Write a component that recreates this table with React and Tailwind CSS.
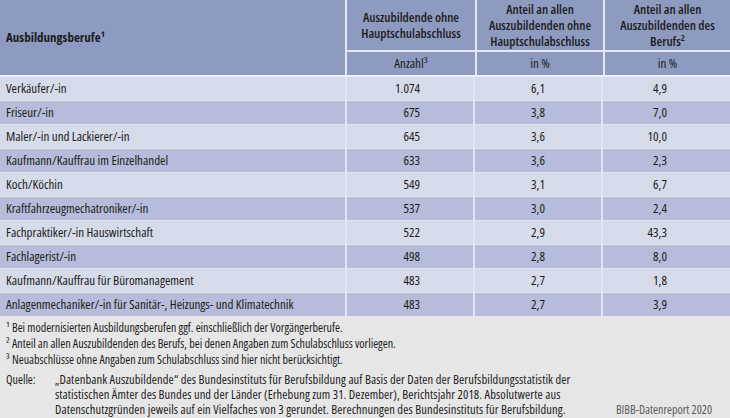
import React from 'react'

const rows = [
  ['Verkäufer/-in', '1.074', '6,1', '4,9'],
  ['Friseur/-in', '675', '3,8', '7,0'],
  ['Maler/-in und Lackierer/-in', '645', '3,6', '10,0'],
  ['Kaufmann/Kauffrau im Einzelhandel', '633', '3,6', '2,3'],
  ['Koch/Köchin', '549', '3,1', '6,7'],
  ['Kraftfahrzeugmechatroniker/-in', '537', '3,0', '2,4'],
  ['Fachpraktiker/-in Hauswirtschaft', '522', '2,9', '43,3'],
  ['Fachlagerist/-in', '498', '2,8', '8,0'],
  ['Kaufmann/Kauffrau für Büromanagement', '483', '2,7', '1,8'],
  ['Anlagenmechaniker/-in für Sanitär-, Heizungs- und Klimatechnik', '483', '2,7', '3,9'],
]

const headers = [
  ['Auszubildende ohne', 'Hauptschulabschluss'],
  ['Anteil an allen', 'Auszubildenden ohne', 'Hauptschulabschluss'],
  ['Anteil an allen', 'Auszubildenden des', 'Berufs²'],
]

const App = () => {
  return (
    <div className="w-[730px] h-[418px] overflow-hidden bg-[#e6e6e6] text-[#1c1c1c] font-['Open_Sans',sans-serif] font-stretch-[75%]">
      {/* Header */}
      <div className="flex h-[77px] bg-[#8e9bc0] border-b-2 border-[#eceff6]">
        <div className="w-[345px] flex items-center pl-[6px] text-[13px] font-bold">
          Ausbildungsberufe¹
        </div>
        <div className="flex-1 flex border-l-2 border-[#e4e7f0]">
          {headers.map((lines, i) => (
            <div key={i} className={`flex flex-col ${i === 2 ? 'flex-1' : 'w-[128px]'} ${i > 0 ? 'border-l-2 border-[#e4e7f0]' : ''}`}>
              <div className="h-[52px] flex flex-col justify-center items-center text-[13px] font-semibold text-center border-b-2 border-[#e4e7f0]">
                {lines.map((l) => (
                  <span key={l} className="leading-[16px]">{l}</span>
                ))}
              </div>
              <div className="flex-1 flex items-center justify-center text-[13px]">
                {i === 0 ? 'Anzahl³' : 'in %'}
              </div>
            </div>
          ))}
        </div>
      </div>

      {/* Body */}
      {rows.map((r, i) => (
        <div
          key={r[0]}
          className={`flex h-[24px] text-[13px] border-b border-[#e2e5ef] ${i % 2 === 0 ? 'bg-[#d6dbe9]' : 'bg-[#b6bcd9]'}`}
        >
          <div className="w-[345px] flex items-center pl-[6px]">{r[0]}</div>
          <div className="w-[128px] flex items-center justify-end pr-[53px] border-l-2 border-[#e4e7f0]">{r[1]}</div>
          <div className="w-[128px] flex items-center justify-end pr-[56px] border-l-2 border-[#e4e7f0]">{r[2]}</div>
          <div className="flex-1 flex items-center justify-end pr-[63px] border-l-2 border-[#e4e7f0]">{r[3]}</div>
        </div>
      ))}

      {/* Footnotes */}
      <div className="px-[6px] pt-[3px] text-[12px] leading-[16px]">
        <p>¹ Bei modernisierten Ausbildungsberufen ggf. einschließlich der Vorgängerberufe.</p>
        <p>² Anteil an allen Auszubildenden des Berufs, bei denen Angaben zum Schulabschluss vorliegen.</p>
        <p>³ Neuabschlüsse ohne Angaben zum Schulabschluss sind hier nicht berücksichtigt.</p>
        <div className="flex mt-[4px] leading-[15px]">
          <span className="w-[49px] shrink-0">Quelle:</span>
          <p className="whitespace-nowrap text-[12.5px] tracking-[0.1px]">
            „Datenbank Auszubildende“ des Bundesinstituts für Berufsbildung auf Basis der Daten der Berufsbildungsstatistik der
            <br />
            statistischen Ämter des Bundes und der Länder (Erhebung zum 31. Dezember), Berichtsjahr 2018. Absolutwerte aus
            <br />
            Datenschutzgründen jeweils auf ein Vielfaches von 3 gerundet. Berechnungen des Bundesinstituts für Berufsbildung.
          </p>
          <span className="ml-auto self-end pr-[12px] text-[#5a5a5a]">BIBB-Datenreport 2020</span>
        </div>
      </div>
    </div>
  )
}

export default App
